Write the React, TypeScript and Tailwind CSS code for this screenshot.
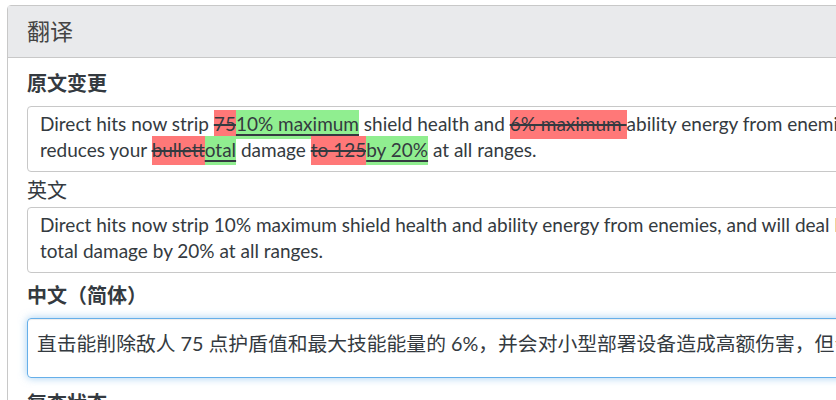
const Del = ({ children }: { children: string }) => (
  <del className="bg-[#ff7878] pt-[2px] pb-[4px] line-through decoration-[1.5px]">{children}</del>
);

const Ins = ({ children }: { children: string }) => (
  <ins className="bg-[#90ee90] pt-[2px] pb-[4px] underline decoration-[2px] underline-offset-[3px]">{children}</ins>
);

export default function App() {
  return (
    <div
      className="h-[400px] w-[836px] overflow-hidden bg-white pl-[7px] pt-[5px] text-[#343a40]"
      style={{ fontFamily: 'Lato, "Noto Sans CJK SC", sans-serif' }}
    >
      <div className="w-[1300px] rounded-[4px] border border-[#c8c8c8]">
        {/* Header */}
        <div className="h-[52px] border-b border-[#c8c8c8] bg-[#e9eaec] pl-[19px] text-[23px] leading-[51px] text-[#444]">
          翻译
        </div>

        {/* Body */}
        <div className="pl-[19px] pt-[10px]">
          <h3 className="text-[20px] font-bold leading-[30px]">原文变更</h3>
          <div className="mt-[8px] w-[1250px] whitespace-nowrap rounded-[4px] border border-[#c8c8c8] px-[12px] pt-[4px] pb-[8px] text-[19px] leading-[26px]">
            Direct hits now strip <Del>75</Del>
            <Ins>10% maximum</Ins> shield health and <Del>6% maximum </Del>ability energy from enemies, and will deal high
            damage to small deployables, but
            <br />
            reduces your <Del>bullet</Del>
            <Ins>total</Ins> damage <Del>to 125</Del>
            <Ins>by 20%</Ins> at all ranges.
          </div>

          <div className="mt-[3px] text-[20px] leading-[30px]">英文</div>
          <div className="mt-[2px] w-[1250px] whitespace-nowrap rounded-[4px] border border-[#c8c8c8] px-[12px] pt-[4px] pb-[8px] text-[19px] leading-[26px]">
            Direct hits now strip 10% maximum shield health and ability energy from enemies, and will deal high damage to
            small deployables, but reduces your
            <br />
            total damage by 20% at all ranges.
          </div>

          <h3 className="mt-[7px] text-[20px] font-bold leading-[30px]">中文（简体）</h3>
          <div className="mt-[8px] h-[60px] w-[1250px] whitespace-nowrap rounded-[4px] border border-[#66afe9] px-[9px] pt-[11px] text-[19.8px] leading-[26px] shadow-[inset_0_1px_1px_rgba(0,0,0,0.075),0_0_8px_rgba(102,175,233,0.6)]">
            直击能削除敌人 75 点护盾值和最大技能能量的 6%，并会对小型部署设备造成高额伤害，但会降低你在所有距离的总伤害 20%。
          </div>

          <h3 className="mt-[10px] text-[20px] font-bold leading-[30px]">复查状态</h3>
        </div>
      </div>
    </div>
  );
}
